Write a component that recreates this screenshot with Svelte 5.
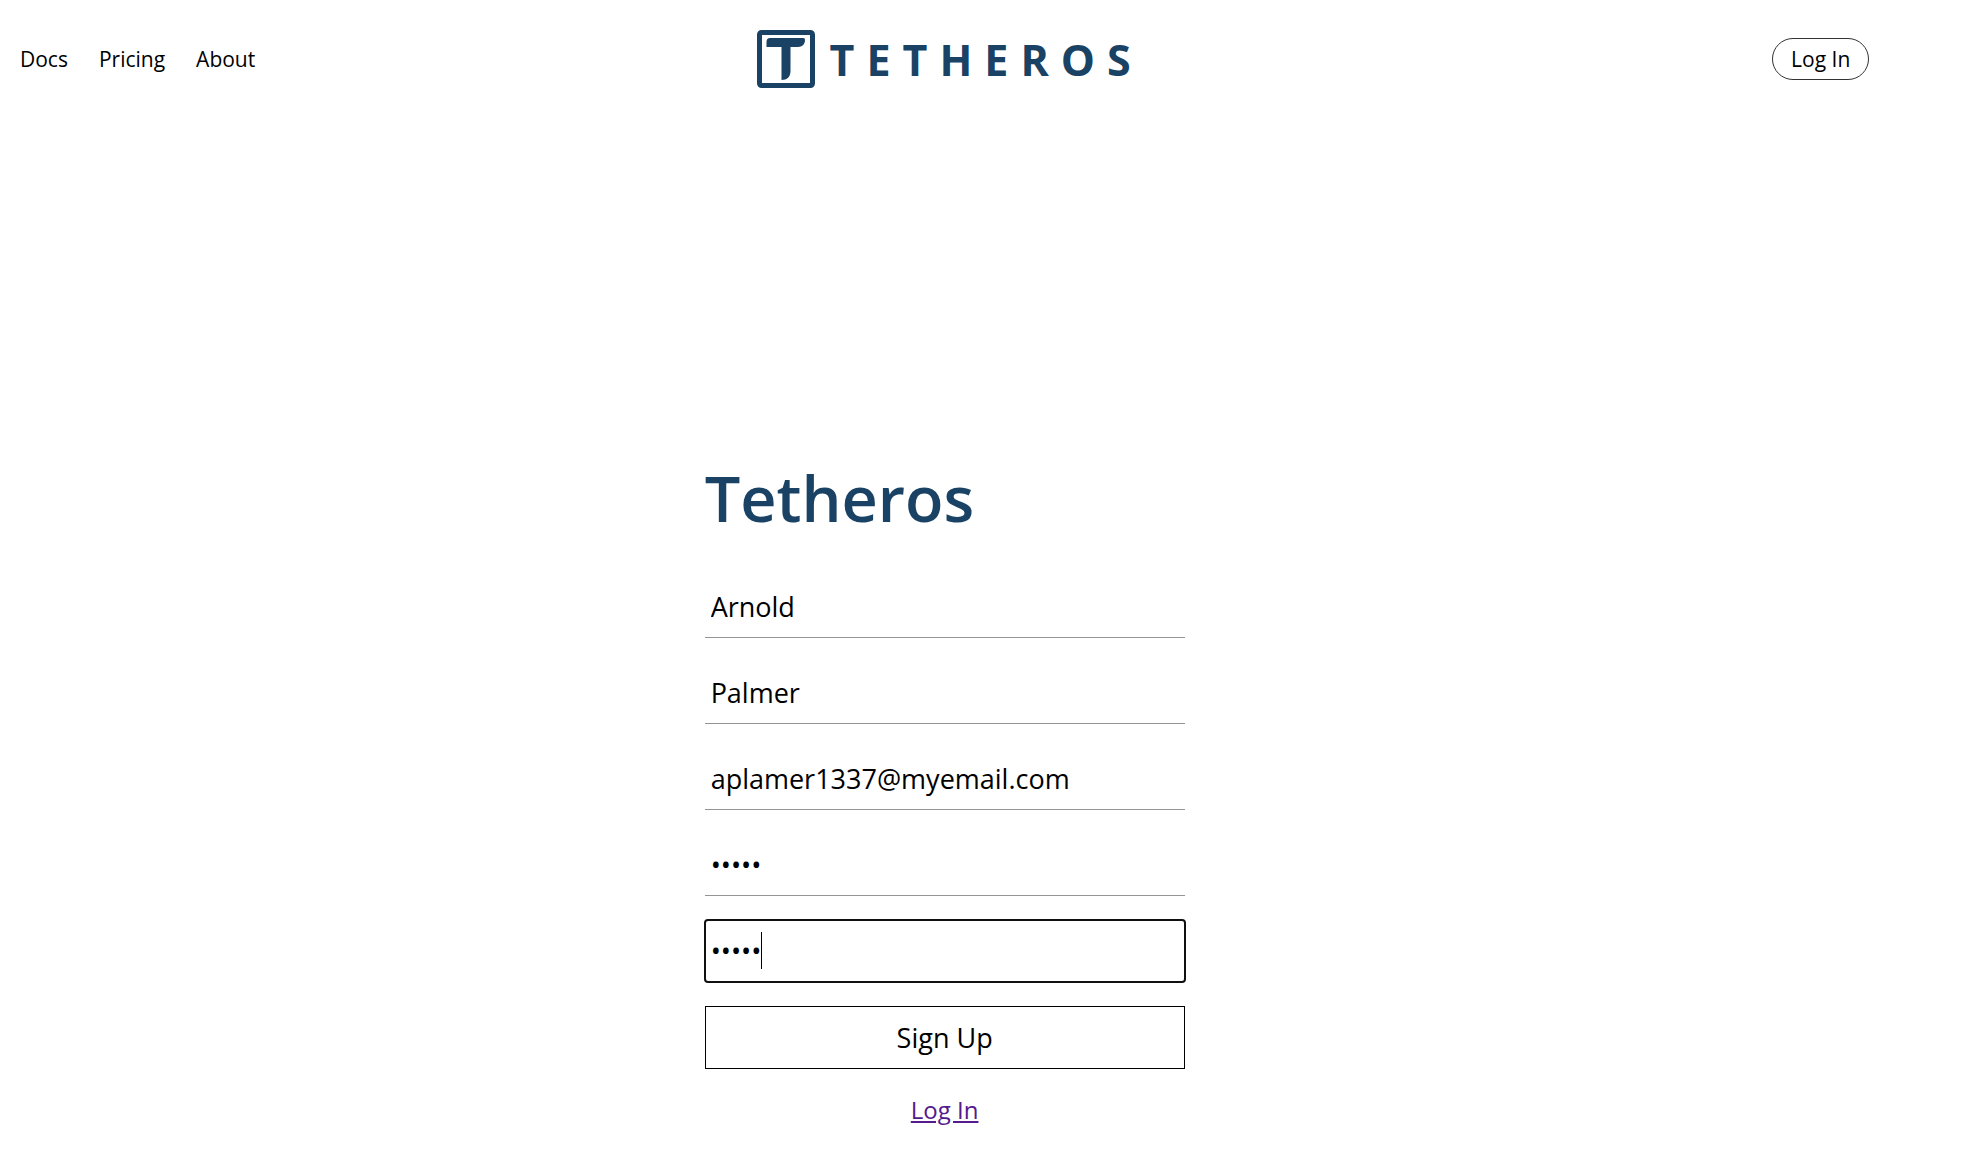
<script>
  const links = ['Docs', 'Pricing', 'About'];

  let firstName = $state('Arnold');
  let lastName = $state('Palmer');
  let email = $state('aplamer1337@myemail.com');
  let password = $state('arnie');
  let confirmation = $state('arnie');

  function focusOnMount(node) {
    node.focus();
    node.setSelectionRange(node.value.length, node.value.length);
  }
</script>

<div class="page">
  <header>
    <nav aria-label="Main">
      {#each links as link}
        <a href="#{link.toLowerCase()}">{link}</a>
      {/each}
    </nav>
    <a class="brand" href="#home">
      <svg viewBox="0 0 58 58" aria-hidden="true">
        <rect x="2.5" y="2.5" width="53" height="53" rx="2" fill="none" stroke="currentColor" stroke-width="5" />
        <path
          fill="currentColor"
          d="M13 8H46.500Q48 8 48 10C48 14 45.500 17 41 17H33.500V41C33.500 47 30 50 24.500 50V17H9.500V12Q9.500 8 13 8Z"
        />
      </svg>
      <span>TETHEROS</span>
    </a>
    <div class="account">
      <button class="pill" type="button">Log In</button>
    </div>
  </header>

  <main>
    <h1>Tetheros</h1>
    <form onsubmit={(event) => event.preventDefault()}>
      <input type="text" aria-label="First name" bind:value={firstName} />
      <input type="text" aria-label="Last name" bind:value={lastName} />
      <input type="email" aria-label="Email" bind:value={email} />
      <input type="password" aria-label="Password" bind:value={password} />
      <div class="field">
        <input type="password" aria-label="Confirm password" bind:value={confirmation} use:focusOnMount />
        <span class="caret" aria-hidden="true"></span>
      </div>
      <button class="submit" type="submit">Sign Up</button>
    </form>
    <a class="login" href="#login">Log In</a>
  </main>
</div>

<style>
  :global(body) {
    background: #fff;
    color: #000;
    font-family: 'Open Sans', sans-serif;
  }

  .page {
    width: 96%;
  }

  header {
    display: grid;
    grid-template-columns: 1fr auto 1fr;
    align-items: center;
    padding: 28px 20px 0;
  }

  nav {
    display: flex;
    gap: 31px;
  }

  nav a {
    color: inherit;
    font-size: 21px;
    line-height: 28px;
    text-decoration: none;
  }

  .brand {
    display: flex;
    align-items: center;
    gap: 15px;
    color: #194264;
    font-size: 43px;
    font-weight: 700;
    letter-spacing: 12px;
    line-height: 60px;
    text-decoration: none;
  }

  .brand span {
    margin-right: -10px;
    padding-top: 2px;
  }

  .brand svg {
    width: 58px;
    height: 58px;
  }

  .account {
    display: flex;
    justify-content: flex-end;
  }

  .pill {
    padding: 6px 18px;
    border: 1px solid #333;
    border-radius: 21px;
    background: #fff;
    color: #000;
    font: 21px/28px 'Open Sans', sans-serif;
  }

  main {
    display: flex;
    flex-direction: column;
    align-items: center;
    max-width: 480px;
    margin: 0 auto;
    padding-top: 364px;
  }

  h1 {
    align-self: stretch;
    margin: 0 0 34px;
    color: #194264;
    font-size: 63px;
    font-weight: 600;
    line-height: 88px;
  }

  form {
    display: flex;
    flex-direction: column;
    gap: 24px;
    width: 100%;
  }

  input {
    display: block;
    box-sizing: border-box;
    width: 100%;
    height: 62px;
    padding: 0 6px;
    border: 0;
    border-bottom: 1px solid #949494;
    background: #fff;
    color: #000;
    font: 27px/36px 'Open Sans', sans-serif;
  }

  input:focus {
    border-bottom-color: transparent;
    caret-color: transparent;
    outline: auto 1px #101010;
  }

  .field {
    position: relative;
  }

  .caret {
    display: none;
    position: absolute;
    top: 12px;
    left: 56px;
    width: 1px;
    height: 37px;
    background: #000;
  }

  input:focus + .caret {
    display: block;
  }

  .submit {
    height: 63px;
    border: 1px solid #000;
    background: #fff;
    color: #000;
    font: 27px/36px 'Open Sans', sans-serif;
  }

  .login {
    margin-top: 24px;
    color: #551a8b;
    font-size: 24px;
    line-height: 34px;
  }
</style>
